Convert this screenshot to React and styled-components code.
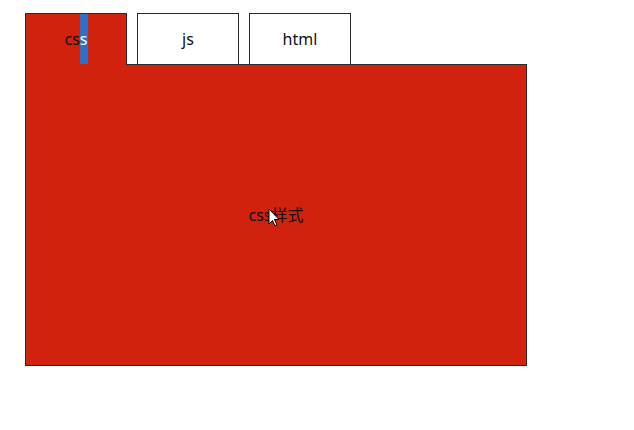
import React, { useState } from "react";
import styled, { createGlobalStyle } from "styled-components";

const Global = createGlobalStyle`
  html, body { margin: 0; padding: 0; background: #ffffff; }
  body { font-family: "Noto Sans", "Noto Sans CJK SC", sans-serif; }
`;

const Page = styled.div`
  padding: 13px 0 0 25px;
  width: 634px;
  height: 430px;
  box-sizing: border-box;
`;

const TabBar = styled.div`
  display: flex;
  gap: 10px;
  height: 51px;
`;

const Tab = styled.div`
  width: 100px;
  height: ${(p) => (p.$active ? "51px" : "50px")};
  border: 1px solid #2a2a2a;
  border-bottom: ${(p) => (p.$active ? "none" : "1px solid #2a2a2a")};
  background: ${(p) => (p.$active ? "#d0220c" : "#ffffff")};
  color: #111;
  font-size: 16px;
  line-height: 50px;
  text-align: center;
  position: relative;
  z-index: 1;
  margin-bottom: ${(p) => (p.$active ? "-1px" : "0")};
  cursor: pointer;
`;

const Selected = styled.span`
  display: inline-block;
  background: #2f6fc4;
  color: #ffffff;
  line-height: 50px;
`;

const Panel = styled.div`
  width: 500px;
  height: 300px;
  border: 1px solid #2a2a2a;
  background: #d0220c;
  color: #111;
  font-size: 16px;
  line-height: 300px;
  text-align: center;
  position: relative;
`;

const Cursor = styled.svg`
  position: absolute;
  left: 242px;
  top: 143px;
  width: 12px;
  height: 19px;
`;

const tabs = [
  { key: "css", label: "css", content: "css样式" },
  { key: "js", label: "js", content: "js脚本" },
  { key: "html", label: "html", content: "html结构" },
];

export default function App() {
  const [active, setActive] = useState("css");
  const current = tabs.find((t) => t.key === active);
  return (
    <Page>
      <Global />
      <TabBar>
        {tabs.map((t) => (
          <Tab key={t.key} $active={t.key === active} onClick={() => setActive(t.key)}>
            {t.key === "css" ? (
              <>
                cs<Selected>s</Selected>
              </>
            ) : (
              t.label
            )}
          </Tab>
        ))}
      </TabBar>
      <Panel>
        {current.content}
        <Cursor viewBox="0 0 12 19">
          <path d="M1 1 L1 16 L4.5 12.5 L7 18 L9 17 L6.5 11.5 L11 11.5 Z" fill="#ffffff" stroke="#000" strokeWidth="1" strokeLinejoin="round" />
        </Cursor>
      </Panel>
    </Page>
  );
}
